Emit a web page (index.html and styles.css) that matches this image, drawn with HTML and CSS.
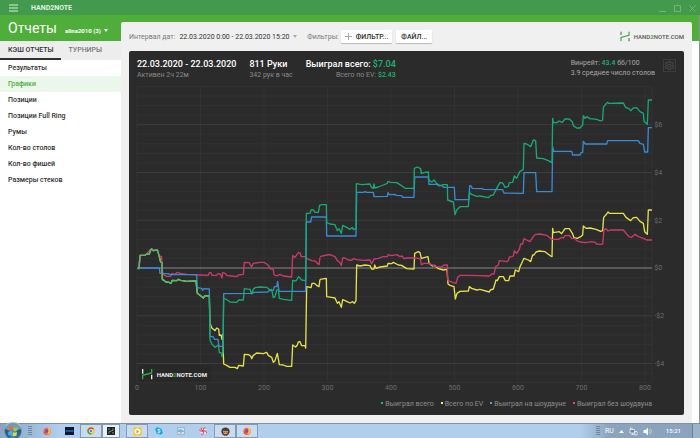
FILE: index.html
```html
<!DOCTYPE html>
<html lang="ru">
<head>
<meta charset="utf-8">
<title>HAND2NOTE</title>
<link rel="stylesheet" href="styles.css">
</head>
<body>
<header class="titlebar">
  <button class="icon-btn menu" aria-label="Меню"><svg width="10" height="8" viewBox="0 0 10 8"><path d="M0 1h9M0 4h9M0 7h9" stroke="#d6efd8"/></svg></button>
  <strong class="app-name">HAND2NOTE</strong>
  <div class="window-controls">
    <button class="icon-btn" aria-label="Свернуть"><svg width="7" height="8" viewBox="0 0 7 8"><path d="M0 7.5h7"/></svg></button>
    <button class="icon-btn" aria-label="Развернуть"><svg width="7" height="8" viewBox="0 0 7 8"><path d="M.5 1.5h6v6h-6z"/></svg></button>
    <button class="icon-btn" aria-label="Закрыть"><svg width="7" height="8" viewBox="0 0 7 8"><path d="M.5 1.5l6 6M6.5 1.5l-6 6"/></svg></button>
  </div>
</header>
<div class="workspace">
  <aside class="sidebar">
    <div class="heading">
      <h1>Отчеты</h1>
      <button class="account">alina2010 (3) <i class="caret"></i></button>
    </div>
    <nav class="tabs"><a class="active" href="#cash">КЭШ ОТЧЕТЫ</a><a href="#tour">ТУРНИРЫ</a></nav>
    <nav class="reports">
      <a href="#results">Результаты</a>
      <a class="active" href="#charts">Графики</a>
      <a href="#positions">Позиции</a>
      <a href="#fullring">Позиции Full Ring</a>
      <a href="#rooms">Румы</a>
      <a href="#tables">Кол-во столов</a>
      <a href="#chips">Кол-во фишей</a>
      <a href="#stacks">Размеры стеков</a>
    </nav>
  </aside>
  <main class="panel">
    <div class="toolbar">
      <span class="muted">Интервал дат:</span>
      <button class="range">22.03.2020 0:00 - 22.03.2020 15:20 <i class="caret"></i></button>
      <span class="muted">Фильтры:</span>
      <button class="raised filter"><svg width="7" height="7" viewBox="0 0 7 7"><path d="M0 3.5h7M3.5 0v7" stroke="#aaa"/></svg>ФИЛЬТР...</button>
      <button class="raised">ФАЙЛ...</button>
      <div class="brand">
        <svg width="10" height="11" viewBox="0 0 30 33"><path d="M3 2v10M27 21v10" stroke="#555" stroke-width="3"/><path d="M3 31V19L27 13V2" fill="none" stroke="#35ad45" stroke-width="3.5"/></svg>
        <span>HAND<b>2</b>NOTE.COM</span>
      </div>
    </div>
    <section class="card">
      <div class="stats">
        <div><h2>22.03.2020 - 22.03.2020</h2><p>Активен 2ч 22м</p></div>
        <div><h2>811 Руки</h2><p>342 рук в час</p></div>
        <div class="won"><h2>Выиграл всего: <em>$7.04</em></h2><p>Всего по EV: <em>$2.43</em></p></div>
        <div class="rate"><p>Винрейт: <em>43.4</em> бб/100</p><p>3.9 среднее число столов</p></div>
        <button class="settings" aria-label="Настройки"><svg width="9" height="9" viewBox="0 0 24 24"><path d="M10 1h4l1 3 3 1 3-1 2 4-2 2v4l2 2-2 4-3-1-3 1-1 3h-4l-1-3-3-1-3 1-2-4 2-2v-4L1 8l2-4 3 1 3-1z"/><circle cx="12" cy="12" r="4"/></svg></button>
      </div>
      <svg class="chart" viewBox="387 252 1665 936" role="img" aria-label="График выигрыша">
        <g class="grid" id="grid"></g>
        <g class="watermark">
          <rect x="417" y="1096" width="216" height="50"/>
          <path class="post" d="M428 1107v14M455 1124v14"/>
          <path class="bridge" d="M428 1138v-12l27-7v-12"/>
          <text x="470" y="1131">HAND<tspan>2</tspan>NOTE.COM</text>
        </g>
        <g class="series yellow">
          <polyline transform="translate(360 690)" points="57,115 60,76 75,76 80,72 88,73 91,60 95,57 100,62 112,60 117,76 122,96 126,98 127,148 133,152 138,156 148,157 153,160 157,151 170,152 175,148 182,151 200,154 228,153 232,190 240,196 250,204 255,197 268,198 270,280 275,293 285,302 290,294 296,297 298,316 303,315 306,328 308,313 311,402 320,406 330,412 345,412 352,416 356,406 370,408 373,373 385,374 392,378 395,386 400,376 410,369 430,371 440,367 445,376 455,382 460,397 465,392 472,370 478,404 490,405 500,409 515,409 518,345 527,351 532,345 535,336 540,335 545,347 555,347 557,354 560,170 573,173 576,160 583,160 590,166 597,170 600,148"/>
          <polyline transform="translate(900 450)" points="60,388 79,385 80,440 95,442 105,444 112,460 117,455 124,472 128,449 140,454 150,459 158,455 163,460 168,452 170,345 180,348 195,345 210,347 215,357 222,357 224,345 228,355 240,351 262,348 264,340 275,341 280,337 295,345 305,346 320,356 342,357 344,310 355,305 360,308 364,325 375,322 384,320 387,340 397,348 403,346 415,356 430,360 441,358 444,402 450,406 462,410 466,447 471,430 480,424 505,423 508,410 515,415 530,420 540,418"/>
          <polyline transform="translate(1440 240)" points="0,628 28,636 31,630 40,627 48,600 52,602 58,590 70,590 76,602 86,602 90,588 102,588 106,570 116,575 120,560 125,550 132,535 145,540 152,545 158,525 162,525 168,516 178,513 195,515 212,528 216,530 218,445 220,458 238,455 245,461 255,446 268,446 277,460 282,473 292,475 302,470 308,465 310,438 318,445 330,444 348,448 362,454 368,452 371,412 380,402 384,396 388,400 430,400 438,412 452,422 460,413 470,412 480,424 490,430 494,455 502,463 505,390 516,390"/>
        </g>
        <g class="series red">
          <polyline transform="translate(360 690)" points="52,115 57,116 60,76 75,76 91,60 100,61 112,60 118,78 125,80 127,122 130,133 140,139 152,139 156,130 165,133 172,127 182,130 200,133 240,135 265,136 268,128 273,128 276,136 290,136 294,131 300,132 303,136 306,144 308,128 316,130 320,136 335,138 350,140 355,135 370,133 373,97 388,98 390,103 395,110 400,100 420,97 432,97 440,102 447,108 450,116 460,119 462,134 470,138 480,133 490,138 515,141 518,77 525,82 535,68 540,68 544,80 555,80 560,85 575,92 585,93 597,104 600,82"/>
          <polyline transform="translate(900 450)" points="60,320 80,315 90,314 105,320 112,332 118,336 124,346 128,324 135,324 145,330 155,331 160,326 170,329 190,331 210,330 215,342 222,327 235,325 250,320 262,320 264,314 275,317 290,314 300,320 306,318 312,326 320,324 345,324 361,326 364,344 372,340 385,340 400,346 410,350 425,351 432,345 442,345 443,390 450,394 460,398 468,400 473,382 480,376 500,376 540,377"/>
          <polyline transform="translate(1440 240)" points="0,587 28,588 35,582 42,582 47,560 55,555 58,542 80,545 85,542 88,531 95,530 100,528 103,513 110,520 118,508 122,492 128,492 132,476 140,480 150,485 160,470 165,464 180,462 200,466 215,478 220,478 235,478 245,472 250,474 255,467 268,466 275,475 285,476 290,482 300,486 318,488 335,485 345,487 350,492 362,493 368,492 372,450 378,446 384,453 390,450 430,450 440,462 447,470 455,472 465,463 475,470 490,475 500,480 516,480"/>
        </g>
        <g class="series blue">
          <polyline transform="translate(360 690)" points="57,114 118,114 120,130 145,131 150,134 230,134 232,173 245,175 248,181 252,176 268,177 270,320 280,320 283,328 294,328 297,349 309,349 311,191 398,190 402,187 443,186 447,182 460,181 463,170 470,170 473,154 477,184 557,184 559,-23"/>
          <polyline transform="translate(900 450)" points="18,216 32,216 35,201 79,201 80,258 168,258 170,127 190,127 195,125 200,127 220,127 222,140 262,139 264,128 268,134 285,133 288,136 305,137 308,142 342,142 344,81 385,81 387,103 412,103 415,107 428,107 430,112 463,112 465,149 507,149 509,107 513,108 517,115 540,116"/>
          <polyline transform="translate(1440 240)" points="0,326 8,326 10,328 68,329 72,339 130,340 132,278 167,278 170,335 216,335 218,200 221,214 275,214 278,225 300,225 303,218 308,217 310,184 316,192 380,192 383,182 475,182 480,190 490,193 494,216 503,216 505,143 516,143"/>
        </g>
        <g class="series green">
          <polyline class="early" transform="translate(360 690)" points="52,115 57,116 60,76 75,76 80,72 88,73 91,60 95,57 100,62 112,60 117,76 122,96 126,98 127,148 133,152 138,156 148,157 153,160 157,151 170,152 175,148 182,151 200,154 228,153 232,190 240,196 250,204 255,197 268,198"/>
          <polyline transform="translate(360 690)" points="268,198 270,330 276,343 285,352 295,345 298,367 303,368 306,380 309,365 311,204 322,210 330,216 350,217 356,210 370,210 373,176 390,178 395,192 400,178 405,173 420,171 440,172 450,180 455,178 460,203 465,200 470,180 475,178 478,205 490,208 515,211 518,151 528,153 536,140 545,150 557,152 559,-50"/>
          <polyline transform="translate(900 450)" points="18,190 30,190 34,179 40,180 45,187 55,187 59,166 65,164 79,164 80,217 90,222 105,224 112,242 117,236 124,250 128,226 140,232 150,238 157,232 160,239 168,235 169,101 185,104 210,102 214,112 220,115 222,102 224,114 235,111 250,105 262,100 264,94 272,97 290,98 300,104 306,108 315,115 342,115 343,55 352,51 362,56 364,70 375,67 385,66 387,90 395,96 403,90 408,99 420,107 430,104 442,104 443,150 460,156 465,194 470,180 480,170 505,170 508,128 515,133 530,139 540,138"/>
          <polyline transform="translate(1440 240)" points="0,348 25,353 31,347 40,345 50,325 60,308 68,309 75,322 85,319 88,308 98,307 103,288 110,295 120,274 130,268 132,190 140,192 152,200 160,180 167,182 170,234 190,236 205,242 216,248 218,115 220,128 230,128 237,123 247,127 255,117 268,117 277,125 280,137 290,144 300,144 308,135 310,107 315,115 320,110 330,116 350,118 362,123 368,120 370,82 378,72 383,67 386,70 430,69 437,82 447,86 452,92 460,84 470,83 480,95 490,100 492,124 502,133 505,60 516,60"/>
        </g>
      </svg>
      <ul class="legend">
        <li class="green">Выиграл всего</li>
        <li class="yellow">Всего по EV</li>
        <li class="blue">Выиграл на шоудауне</li>
        <li class="red">Выиграл без шоудауна</li>
      </ul>
    </section>
  </main>
</div>
<footer class="taskbar">
  <button class="start" aria-label="Пуск"><svg width="18" height="18" viewBox="0 0 36 36"><defs><radialGradient id="orb" cy="70%"><stop offset="0" stop-color="#4bb0df"/><stop offset=".6" stop-color="#23699b"/><stop offset="1" stop-color="#2c5575"/></radialGradient></defs><circle cx="18" cy="18" r="17" fill="url(#orb)" stroke="#7fa6c0"/><path d="M2 14a16 16 0 0 1 32 0q-16 6-32 0z" fill="#c5dbe8" opacity=".5"/><path d="M10 11q4-3 8-1l-1 7q-4-2-8 1z" fill="#f0692d"/><path d="M20 11q4 2 8-1l-2 7q-4 3-7 1z" fill="#9ccc3f"/><path d="M9 20q4-3 8-1l-2 7q-4-2-7 0z" fill="#4fb4ee"/><path d="M19 20q3 2 7 0l-1 7q-4 2-8 0z" fill="#fdcb35"/></svg></button>
  <i class="grip"></i>
  <button class="task" aria-label="Firefox"><svg width="8" height="8" viewBox="0 0 24 24"><circle cx="12" cy="13" r="11" fill="#ff6a2b"/><path d="M14 1q10 5 8 14-3 8-9 6 6-6 1-20z" fill="#ffc53a"/><circle cx="11" cy="12" r="5" fill="#7a48c9"/><path d="M2 15q4 9 12 8-8-1-9-8z" fill="#e8285c"/></svg></button>
  <button class="task" aria-label="888poker"><svg width="9" height="8" viewBox="0 0 27 24"><path fill="#10182a" d="M0 0h27v24H0z"/><path d="M2 12q3-6 6 0t6 0 6 0 5 0M2 12q3 6 6 0t6 0 6 0 5 0" fill="none" stroke="#2488ec" stroke-width="2"/></svg></button>
  <button class="task open" aria-label="Chrome"><svg width="8" height="8" viewBox="0 0 24 24"><circle cx="12" cy="12" r="11" fill="#f0c52d"/><path d="M2 7a11 11 0 0 1 20 0H12l-4 7z" fill="#e64836"/><path d="M2 7a11 11 0 0 0 9 16l4-8-7-1z" fill="#37a852"/><circle cx="12" cy="12" r="5" fill="#4387ee" stroke="#fff" stroke-width="2"/></svg></button>
  <button class="task current" aria-label="Hand2Note"><svg width="8" height="8" viewBox="0 0 24 24"><path fill="#202326" d="M0 0h24v24H0z"/><path d="M6 4v5M18 15v5" stroke="#ddd" stroke-width="2"/><path d="M6 20v-6l12-4V4" fill="none" stroke="#9fcf9d" stroke-width="2"/></svg></button>
  <button class="task open wide" aria-label="Плеер"><svg width="9" height="9" viewBox="0 0 24 24"><path fill="#f2c928" d="M1 1h22v22H1z"/><circle cx="12" cy="12" r="8" fill="#fff"/><path d="M9 7l8 5-8 5z" fill="#d9a812"/></svg></button>
  <button class="task" aria-label="Skype"><svg width="8" height="8" viewBox="0 0 24 24"><circle cx="8" cy="8" r="7" fill="#18a5e8"/><circle cx="16" cy="16" r="7" fill="#18a5e8"/><circle cx="12" cy="12" r="9" fill="#18a5e8"/><path d="M16 8q-7-4-8 1 0 2 4 3t4 3q-2 5-8 1" fill="none" stroke="#fff" stroke-width="2.5"/></svg></button>
  <button class="task" aria-label="Изображения"><svg width="8" height="8" viewBox="0 0 24 24"><path fill="#e9eff3" stroke="#7898b8" stroke-width="2" d="M2 2h20v20H2z"/><path d="M3 10l7-5 11 7v3H3z" fill="#76b7df"/><path d="M7 19l4-5 6 5z" fill="#c99858"/></svg></button>
  <button class="task" aria-label="Утилита"><svg width="8" height="8" viewBox="0 0 24 24"><circle cx="12" cy="12" r="9" fill="#f5dce2"/><path d="M12 12q-2-10 7-10M12 12q9-3 11 5M12 12q4 9-5 11M12 12q-9 3-11-4M12 12Q3 8 7 2" fill="none" stroke="#df3448" stroke-width="3"/></svg></button>
  <button class="task open" aria-label="Покер"><svg width="9" height="9" viewBox="0 0 24 24"><circle cx="12" cy="12" r="11" fill="#47372d"/><circle cx="12" cy="12" r="7" fill="#d7b07f"/><path d="M4 10q8-9 16 0z" fill="#272725"/><path d="M6 14h5M13 14h5" stroke="#b02d25" stroke-width="3"/></svg></button>
  <button class="task open" aria-label="Firefox"><svg width="8" height="8" viewBox="0 0 24 24"><circle cx="12" cy="13" r="11" fill="#ff6a2b"/><path d="M14 1q10 5 8 14-3 8-9 6 6-6 1-20z" fill="#ffc53a"/><circle cx="11" cy="12" r="5" fill="#7a48c9"/><path d="M2 15q4 9 12 8-8-1-9-8z" fill="#e8285c"/></svg></button>
  <div class="tray">
    <i class="grip"></i>
    <span class="lang">RU</span>
    <svg width="5" height="3" viewBox="0 0 5 3"><path d="M0 3l2.500-3L5 3z" fill="#fff"/></svg>
    <svg width="9" height="9" viewBox="0 0 18 18"><path d="M2 5h9v7H2zM5 15h6M8 12v3M12 9h4v7h-4zM3 1v4M6 1v4" fill="#74869a" stroke="#f4f7fa" stroke-width="1.500"/></svg>
    <svg width="9" height="9" viewBox="0 0 18 18"><path d="M1 6h4l5-5v16l-5-5H1z" fill="#fff"/><path d="M12 5q3 4 0 8M15 3q4 6 0 12" fill="none" stroke="#e4ebf2"/></svg>
    <time>15:21</time>
    <button class="show-desktop" aria-label="Показать рабочий стол"></button>
  </div>
</footer>
<script src="chart.js"></script>
</body>
</html>
```
FILE: chart.js
```js
// Builds the grid and axis labels; one unit is a third of a pixel at base size.
const grid = document.getElementById("grid");
const NS = "http://www.w3.org/2000/svg";
const left = 411, right = 1956, top0 = 259, bottom = 1147, zero = 804;

function add(tag, attrs, text) {
  const node = document.createElementNS(NS, tag);
  for (const key in attrs) node.setAttribute(key, attrs[key]);
  if (text) node.textContent = text;
  grid.appendChild(node);
}

for (let n = 0; n <= 800; n += 100) {
  const x = left + n * 1.905;
  add("line", { x1: x, x2: x, y1: top0, y2: bottom, class: "minor" });
  add("text", { x, y: 1171, "text-anchor": "middle" }, String(n));
}
add("line", { x1: right, x2: right, y1: top0, y2: bottom, class: "minor" });
for (let i = -12; i <= 19; i++) {
  const y = zero - i * 28.66;
  const kind = i === 0 ? "zero" : i % 5 === 0 ? "major" : "minor";
  add("line", { x1: left, x2: right, y1: y, y2: y, class: kind });
}
for (let v = -4; v <= 6; v += 2) {
  add("text", { x: 1963, y: zero - v * 71.65 + 7 }, (v < 0 ? "-$" : "$") + Math.abs(v));
}
```
FILE: styles.css
```css
* { box-sizing: border-box; }
body {
  margin: 0;
  height: 100vh;
  display: flex;
  flex-direction: column;
  overflow: hidden;
  font: 7px/10px Roboto, "Liberation Sans", sans-serif;
  color: #303030;
}
h1, h2, p, ul { margin: 0; padding: 0; }
button { font: inherit; color: inherit; border: 0; padding: 0; background: none; }
a { color: inherit; text-decoration: none; }
em { font-style: normal; font-weight: 500; color: #19b573; }
svg { display: block; flex: none; }
.caret { display: inline-block; border: 2px solid transparent; border-top: 3px solid; border-bottom: 0; }

.titlebar {
  display: flex;
  align-items: center;
  flex: none;
  height: 15px;
  padding: 0 4px 0 9px;
  background: #439a4d;
  color: #dff3e0;
}
.app-name { margin-left: 12px; font-weight: 700; }
.window-controls { display: flex; gap: 8px; margin-left: auto; fill: none; stroke: #76b47c; }

.workspace {
  display: flex;
  flex: 1;
  min-height: 0;
  border-right: 1px solid #8c9590;
  background: linear-gradient(#4fae39 26px, #fff 26px);
}
.sidebar { width: 121px; flex: none; }
.heading { display: flex; align-items: center; gap: 8px; height: 26px; padding-left: 8px; color: #fff; }
.heading h1 { font-size: 14px; font-weight: 400; line-height: 26px; }
.account { margin-top: 5px; font-size: 6px; font-weight: 700; }
.account .caret { margin: 0 0 1px 2px; }
.tabs { display: flex; height: 19px; background: #ededed; font-weight: 500; color: #777; }
.tabs a { flex: 1; padding: 4px 0 0 8px; }
.tabs .active { color: #303030; border-bottom: 2px solid #303030; }
.reports { display: flex; flex-direction: column; font-weight: 500; }
.reports a { height: 16px; padding-left: 8px; line-height: 16px; }
.reports .active { color: #4fae39; background: #ebf7eb; }

.panel {
  flex: 1;
  min-width: 0;
  display: flex;
  flex-direction: column;
  margin: 7px 7px 0 0;
  padding: 0 8px 8px;
  background: #f0f0f0;
  border-radius: 2px 2px 0 0;
}
.toolbar { display: flex; align-items: center; flex: none; height: 29px; }
.muted { color: #777; }
.range { margin: 0 10px 0 4px; }
.range .caret { margin: 0 0 1px 2px; color: #aaa; }
.raised { height: 13px; padding: 0 5px; background: #fff; border-radius: 1px; box-shadow: 0 1px 1px #bbb; font-weight: 500; }
.filter { display: flex; align-items: center; gap: 4px; margin: 0 4px 0 2px; padding: 0 4px; }
.brand { display: flex; align-items: center; gap: 4px; margin-left: auto; color: #555; font-size: 6px; font-weight: 500; }
.brand b { color: #35ad45; }

.card { flex: 1; min-height: 0; background: #2b2b2b; border-radius: 2px; color: #8a8a8a; }
.stats { display: flex; height: 33px; padding: 7px 8px 0; }
.stats h2 { font-size: 9px; line-height: 12px; font-weight: 500; color: #fff; }
.stats div + div { margin-left: 13px; }
.stats .won { text-align: right; }
.stats .rate.rate { margin-left: auto; color: #aaa; }
.settings { display: grid; place-items: center; width: 13px; height: 13px; margin: 1px 0 0 8px; border: 1px solid #3c3c3c; }
.settings svg { fill: none; stroke: #555; stroke-width: 2; }

.chart { width: 100%; }
.grid text { font-size: 21px; fill: #6d6d6d; }
.grid line { stroke-width: 3; }
.grid .minor { stroke: #323232; }
.grid .major { stroke: #3e3e3e; }
.grid .zero { stroke: #6a6a6a; stroke-width: 4; }
.series { fill: none; stroke-width: 4; stroke-linejoin: round; }
.series.green { stroke: #19a974; }
.series.green .early { stroke: #49bd6b; }
.series.yellow { stroke: #e5e14b; }
.series.blue { stroke: #398bd6; }
.series.red { stroke: #cc3a6c; }
.watermark rect { fill: #282828; }
.watermark text { font-size: 18px; font-weight: 700; fill: #eee; }
.watermark tspan { fill: #35ad45; }
.watermark path { fill: none; stroke-width: 4; }
.watermark .post { stroke: #eee; }
.watermark .bridge { stroke: #35ad45; }

.legend { display: flex; justify-content: flex-end; gap: 7px; height: 18px; padding: 3px 32px 0 0; list-style: none; color: #8f8f8f; }
.legend li::before { content: ""; display: inline-block; width: 2px; height: 2px; margin: 0 2px 2px 0; }
.legend .green::before { background: #00c878; }
.legend .yellow::before { background: #fff04a; }
.legend .blue::before { background: #3da5ff; }
.legend .red::before { background: #ff3c78; }

.taskbar {
  display: flex;
  align-items: center;
  flex: none;
  height: 15px;
  padding-left: 4px;
  border-top: 1px solid #7d92a8;
  background: linear-gradient(90deg, #88a4c3, #b1cfec 60px, #b1cfec calc(100% - 120px), #8ba3bd calc(100% - 90px));
}
.start { z-index: 1; margin-right: 6px; }
.grip { width: 4px; height: 10px; background: repeating-linear-gradient(#6f879f 0 1px, transparent 1px 2px); }
.task { display: grid; place-items: center; width: 22px; height: 14px; }
.grip + .task { margin-left: 4px; }
.open { border: 1px solid #8299b3; background: #c9dcef; }
.current { width: 18px; border: 1px solid #8299b3; background: #e8f1fa; }
.wide { margin-left: 6px; }
.tray { display: flex; align-items: center; gap: 5px; height: 14px; margin-left: auto; color: #fff; }
.tray time { margin-left: 9px; font-size: 6px; font-weight: 500; }
.show-desktop { width: 8px; height: 14px; margin-left: 6px; border-left: 1px solid #6a8098; background: #9db3ca; }
```
